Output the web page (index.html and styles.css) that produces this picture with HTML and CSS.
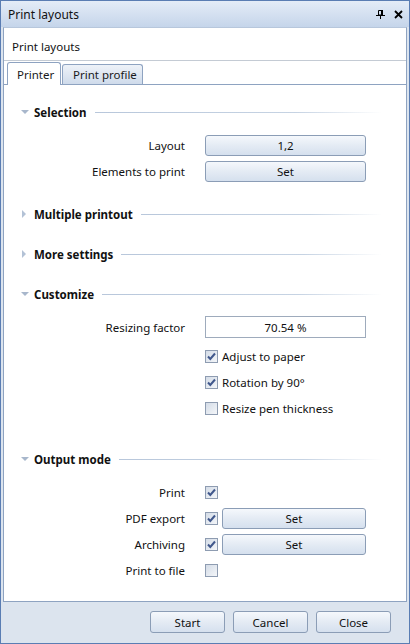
FILE: index.html
```html
<!DOCTYPE html>
<html lang="en">
<head>
  <meta charset="UTF-8">
  <title>Print layouts</title>
  <link rel="stylesheet" href="styles.css">
</head>
<body>

  <div class="window">
    <!-- Title bar -->
    <div class="titlebar">
      <span class="title">Print layouts</span>
      <span class="title-icons">
        <svg class="icon" width="9" height="9" viewBox="0 0 9 9">
          <path d="M2.5 0.5h3v4.5h-3z" fill="none" stroke="#000" stroke-width="1"/>
          <rect x="5" y="0" width="2" height="5" fill="#000"/>
          <rect x="0" y="5" width="9" height="1" fill="#000"/>
          <rect x="4" y="6" width="1" height="3" fill="#000"/>
        </svg>
        <svg class="icon" width="9" height="9" viewBox="0 0 9 9">
          <path d="M1 1L8 8M8 1L1 8" stroke="#000" stroke-width="1.8"/>
        </svg>
      </span>
    </div>

    <div class="panel">
      <div class="panel-header">Print layouts</div>

      <!-- Tabs -->
      <div class="tabs">
        <div class="tab active">Printer</div>
        <div class="tab">Print profile</div>
      </div>

      <div class="tab-body">

        <section class="group">
          <div class="group-head"><span class="arrow open"></span><span class="group-title">Selection</span><span class="group-line"></span></div>
          <div class="group-body">
            <div class="row">
              <span class="row-label">Layout</span>
              <button class="btn wide">1,2</button>
            </div>
            <div class="row">
              <span class="row-label">Elements to print</span>
              <button class="btn wide">Set</button>
            </div>
          </div>
        </section>

        <section class="group">
          <div class="group-head"><span class="arrow closed"></span><span class="group-title">Multiple printout</span><span class="group-line"></span></div>
        </section>

        <section class="group">
          <div class="group-head"><span class="arrow closed"></span><span class="group-title">More settings</span><span class="group-line"></span></div>
        </section>

        <section class="group customize">
          <div class="group-head"><span class="arrow open"></span><span class="group-title">Customize</span><span class="group-line"></span></div>
          <div class="group-body">
            <div class="row">
              <span class="row-label">Resizing factor</span>
              <div class="field">70.54 %</div>
            </div>
            <div class="checks">
              <div class="row">
                <span class="row-label"></span>
                <span class="check on"><svg width="11" height="11" viewBox="0 0 11 11"><path d="M2 5.5L4.3 8L9 2.5" fill="none" stroke="#41588c" stroke-width="2"/></svg></span>
                <span class="check-text">Adjust to paper</span>
              </div>
              <div class="row">
                <span class="row-label"></span>
                <span class="check on"><svg width="11" height="11" viewBox="0 0 11 11"><path d="M2 5.5L4.3 8L9 2.5" fill="none" stroke="#41588c" stroke-width="2"/></svg></span>
                <span class="check-text">Rotation by 90°</span>
              </div>
              <div class="row">
                <span class="row-label"></span>
                <span class="check"></span>
                <span class="check-text">Resize pen thickness</span>
              </div>
            </div>
          </div>
        </section>

        <section class="group">
          <div class="group-head"><span class="arrow open"></span><span class="group-title">Output mode</span><span class="group-line"></span></div>
          <div class="group-body">
            <div class="row">
              <span class="row-label">Print</span>
              <span class="check on"><svg width="11" height="11" viewBox="0 0 11 11"><path d="M2 5.5L4.3 8L9 2.5" fill="none" stroke="#41588c" stroke-width="2"/></svg></span>
            </div>
            <div class="row">
              <span class="row-label">PDF export</span>
              <span class="check on"><svg width="11" height="11" viewBox="0 0 11 11"><path d="M2 5.5L4.3 8L9 2.5" fill="none" stroke="#41588c" stroke-width="2"/></svg></span>
              <button class="btn small">Set</button>
            </div>
            <div class="row">
              <span class="row-label">Archiving</span>
              <span class="check on"><svg width="11" height="11" viewBox="0 0 11 11"><path d="M2 5.5L4.3 8L9 2.5" fill="none" stroke="#41588c" stroke-width="2"/></svg></span>
              <button class="btn small">Set</button>
            </div>
            <div class="row">
              <span class="row-label">Print to file</span>
              <span class="check"></span>
            </div>
          </div>
        </section>

      </div>
    </div>

    <!-- Dialog buttons -->
    <div class="footer">
      <button class="btn dialog">Start</button>
      <button class="btn dialog">Cancel</button>
      <button class="btn dialog">Close</button>
    </div>
  </div>

</body>
</html>
```

FILE: styles.css
```css
/* General styles */
body {
  margin: 0;
  padding: 0;
  font-family: "Noto Sans", "Open Sans", sans-serif;
  font-size: 11.5px;
  color: #111;
  background-color: #dce4ee;
}

.window {
  width: 410px;
  height: 644px;
  box-sizing: border-box;
  border: 1px solid #5a7db3;
  background-color: #dce4ee;
  display: flex;
  flex-direction: column;
}

/* Title bar */
.titlebar {
  height: 26px;
  flex-shrink: 0;
  display: flex;
  align-items: center;
  justify-content: space-between;
  padding: 0 6px 0 7px;
  background: linear-gradient(#e4ecf7, #c5d5ea);
  font-size: 12px;
}

.title-icons {
  display: flex;
  gap: 9px;
  align-items: center;
}

.icon {
  display: block;
}

/* White content panel */
.panel {
  height: 575px;
  flex-shrink: 0;
  box-sizing: border-box;
  margin: 0 2px;
  background-color: #ffffff;
  border: 1px solid #8ea3c1;
  border-top-color: #b7c7dc;
  display: flex;
  flex-direction: column;
  overflow: hidden;
}

.panel-header {
  height: 33px;
  flex-shrink: 0;
  box-sizing: border-box;
  padding: 4px 0 0 8px;
  display: flex;
  align-items: center;
  border-bottom: 1px solid #c4cbd4;
}

/* Tabs */
.tabs {
  height: 24px;
  flex-shrink: 0;
  box-sizing: border-box;
  display: flex;
  align-items: flex-end;
  gap: 1px;
  padding-left: 3px;
  border-bottom: 1px solid #8ea3c1;
}

.tab {
  height: 20px;
  box-sizing: border-box;
  padding: 0 0 0 10px;
  display: flex;
  align-items: center;
  white-space: nowrap;
  border: 1px solid #8ea3c1;
  border-bottom: none;
  border-radius: 3px 3px 0 0;
  background: linear-gradient(#eef2f8, #cfdbeb);
  color: #1a1a1a;
}

.tab.active {
  height: 23px;
  width: 54px;
  margin-bottom: -1px;
  padding: 0 0 0 9px;
  background: #ffffff;
}

.tab:not(.active) {
  width: 81px;
}

/* Tab page */
.tab-body {
  flex: 1;
  min-height: 0;
  padding-top: 17px;
}

.group {
  margin-bottom: 20px;
}

.group:last-child {
  margin-bottom: 0;
}

.group.customize {
  margin-bottom: 28px;
}

.group-head {
  height: 20px;
  display: flex;
  align-items: center;
  padding-left: 13px;
  padding-right: 24px;
}

.group-title {
  font-weight: bold;
}

.group-line {
  flex: 1;
  height: 1px;
  margin-left: 8px;
  background: linear-gradient(to right, #b8c7db, #c6d3e3 70%, rgba(255, 255, 255, 0));
}

.arrow {
  width: 0;
  height: 0;
}

.arrow.open {
  margin-left: 4px;
  margin-right: 5px;
  border-left: 4px solid transparent;
  border-right: 4px solid transparent;
  border-top: 4px solid #a8b7cc;
}

.arrow.closed {
  margin-left: 5px;
  margin-right: 8px;
  border-top: 4px solid transparent;
  border-bottom: 4px solid transparent;
  border-left: 4px solid #b3c2d6;
}

.group-body {
  padding-top: 10px;
}

.checks {
  padding-top: 3px;
}

.row {
  height: 26px;
  display: flex;
  align-items: center;
}

.row-label {
  width: 181px;
  margin-right: 20px;
  text-align: right;
  flex-shrink: 0;
}

/* Controls */
.btn {
  height: 21px;
  box-sizing: border-box;
  padding: 0;
  font-family: inherit;
  font-size: 11.5px;
  color: #111;
  border: 1px solid #8b9db6;
  border-radius: 3px;
  background: linear-gradient(#f5f8fc, #e4ebf4 50%, #d5e0ee);
}

.btn.wide {
  width: 161px;
}

.btn.small {
  width: 144px;
  margin-left: 4px;
}

.field {
  width: 161px;
  height: 22px;
  box-sizing: border-box;
  border: 1px solid #9eabbc;
  display: flex;
  align-items: center;
  justify-content: center;
}

.check {
  width: 13px;
  height: 13px;
  box-sizing: border-box;
  flex-shrink: 0;
  border: 1px solid #8e9cb1;
  background: linear-gradient(135deg, #d4dce7, #f4f6f9);
  display: flex;
  align-items: center;
  justify-content: center;
}

.check svg {
  display: block;
}

.check-text {
  margin-left: 4px;
}

/* Dialog buttons */
.footer {
  flex: 1;
  display: flex;
  justify-content: flex-end;
  align-items: flex-start;
  gap: 8px;
  padding: 9px 18px 0 0;
}

.btn.dialog {
  width: 75px;
  height: 22px;
}
```
